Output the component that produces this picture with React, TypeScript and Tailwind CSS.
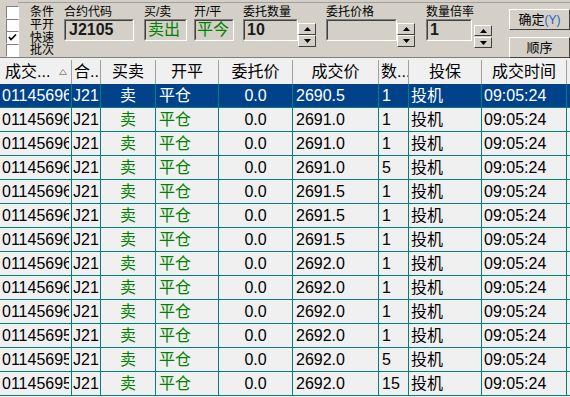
const font = { fontFamily: '"Liberation Sans", "Noto Sans CJK SC", sans-serif' };

type Row = { id: string; price: string; qty: string };

const rows: Row[] = [
  { id: "011456960", price: "2690.5", qty: "1" },
  { id: "011456960", price: "2691.0", qty: "1" },
  { id: "011456960", price: "2691.0", qty: "1" },
  { id: "011456960", price: "2691.0", qty: "5" },
  { id: "011456960", price: "2691.5", qty: "1" },
  { id: "011456960", price: "2691.5", qty: "1" },
  { id: "011456960", price: "2691.5", qty: "1" },
  { id: "011456960", price: "2692.0", qty: "1" },
  { id: "011456960", price: "2692.0", qty: "1" },
  { id: "011456960", price: "2692.0", qty: "1" },
  { id: "011456959", price: "2692.0", qty: "1" },
  { id: "011456959", price: "2692.0", qty: "5" },
  { id: "011456959", price: "2692.0", qty: "15" },
];

const cols = [
  { w: "w-[72px]", title: "成交...", align: "justify-start pl-[5px]" },
  { w: "w-[29px]", title: "合...", align: "justify-start pl-[2px]" },
  { w: "w-[55px]", title: "买卖", align: "justify-center" },
  { w: "w-[63px]", title: "开平", align: "justify-center" },
  { w: "w-[74px]", title: "委托价", align: "justify-center" },
  { w: "w-[86px]", title: "成交价", align: "justify-center" },
  { w: "w-[30px]", title: "数...", align: "justify-start pl-[2px]" },
  { w: "w-[73px]", title: "投保", align: "justify-center" },
  { w: "w-[85px]", title: "成交时间", align: "justify-center" },
];

function Check({ checked }: { checked?: boolean }) {
  return (
    <div className="w-[13px] h-[13px] shrink-0 border-t border-l border-t-[#808080] border-l-[#808080] border-b border-r border-b-white border-r-white bg-white flex items-center justify-center">
      {checked && (
        <svg width="9" height="9" viewBox="0 0 9 9">
          <path d="M1 4 L3 6.5 L8 1.5" stroke="#000" strokeWidth="1.6" fill="none" />
        </svg>
      )}
    </div>
  );
}

function Field({ label, w, children }: { label: string; w: string; children?: React.ReactNode }) {
  return (
    <div className="flex flex-col">
      <div className="text-[12px] leading-[14px] h-[15px] text-black pt-[1px]">{label}</div>
      <div
        className={`${w} h-[22px] border border-t-[#808080] border-l-[#808080] border-b-white border-r-white flex items-center`}
      >
        <div className="w-full h-full border border-t-[#404040] border-l-[#404040] border-b-[#d4d0c8] border-r-[#d4d0c8] flex items-center px-[2px]">
          {children}
        </div>
      </div>
    </div>
  );
}

function SpinBtn({ up, h }: { up?: boolean; h: string }) {
  return (
    <div className={`w-[18px] ${h} bg-[#d4d0c8] border border-t-white border-l-white border-b-[#404040] border-r-[#404040] flex items-center justify-center`}>
      <svg width="7" height="4" viewBox="0 0 7 4">
        {up ? <path d="M0 4 L3.5 0 L7 4 Z" fill="#000" /> : <path d="M0 0 L7 0 L3.5 4 Z" fill="#000" />}
      </svg>
    </div>
  );
}

function Spinner({ small }: { small?: boolean }) {
  return (
    <div className={`flex flex-col ${small ? "mt-[21px] gap-[1px]" : "mt-[19px]"}`}>
      <SpinBtn up h={small ? "h-[11px]" : "h-[12px]"} />
      <SpinBtn h={small ? "h-[11px]" : "h-[12px]"} />
    </div>
  );
}

function Button({ children }: { children: React.ReactNode }) {
  return (
    <div className="w-[61px] h-[21px] bg-[#d4d0c8] border border-t-white border-l-white border-b-[#404040] border-r-[#404040] flex items-center justify-center text-[13px] text-black">
      {children}
    </div>
  );
}

export default function App() {
  return (
    <div className="w-[570px] h-[397px] bg-[#f0f0f0] overflow-hidden" style={font}>
      {/* toolbar */}
      <div className="h-[58px] bg-[#d4d0c8] border-b border-[#808080]">
        <div className="h-[3px] ml-[18px] border-b border-[#a0a0a0]" />
        <div className="flex">
          <div className="flex flex-col pl-[6px] pt-[3px] w-[60px]">
            {[
              ["条件", false],
              ["平开", false],
              ["快速", true],
              ["批次", false],
            ].map(([l, c]) => (
              <div key={l as string} className="flex items-center h-[12.7px] gap-[11px]">
                <Check checked={c as boolean} />
                <span className="text-[12px] leading-[12px] text-black">{l as string}</span>
              </div>
            ))}
          </div>
          <div className="flex pt-[1px] ml-[4px]">
            <Field label="合约代码" w="w-[70px]">
              <span className="text-[16px] font-bold text-[#1a1a1a] ml-[1px]">J2105</span>
            </Field>
            <div className="ml-[10px]">
              <Field label="买/卖" w="w-[43px]">
                <span className="text-[16px] text-[#008000]">卖出</span>
              </Field>
            </div>
            <div className="ml-[7px]">
              <Field label="开/平" w="w-[40px]">
                <span className="text-[16px] text-[#008000] -ml-[1px]">平今</span>
              </Field>
            </div>
            <div className="ml-[9px] flex">
              <Field label="委托数量" w="w-[55px]">
                <span className="text-[16px] font-bold text-[#1a1a1a]">10</span>
              </Field>
              <Spinner />
            </div>
            <div className="ml-[10px] flex">
              <Field label="委托价格" w="w-[71px]" />
              <Spinner />
            </div>
            <div className="ml-[11px] flex">
              <Field label="数量倍率" w="w-[46px]">
                <span className="text-[16px] font-bold text-[#1a1a1a]">1</span>
              </Field>
              <Spinner small />
            </div>
            <div className="ml-[17px] flex flex-col gap-[7px] pt-[5px]">
              <Button>
                确定<span className="text-[#1f5fbf] text-[12px]">(Y)</span>
              </Button>
              <Button>顺序</Button>
            </div>
          </div>
        </div>
      </div>

      {/* header */}
      <div className="flex h-[26px] bg-[#f0f0f0] pt-[2px]">
        {cols.map((c, i) => (
          <div
            key={i}
            className={`${c.w} h-full flex items-center border-r border-[#a0a0a0] text-[16px] text-black whitespace-nowrap overflow-hidden ${c.align}`}
          >
            {c.title}
            {i === 0 && (
              <svg width="8" height="6" viewBox="0 0 8 6" className="ml-[9px]">
                <path d="M0.5 5.5 L4 0.5 L7.5 5.5 Z" fill="none" stroke="#909090" />
              </svg>
            )}
          </div>
        ))}
      </div>

      {/* body */}
      <div className="flex flex-col">
        {rows.map((r, i) => {
          const sel = i === 0;
          const txt = sel ? "text-white" : "text-black";
          const grn = sel ? "text-white" : "text-[#008000]";
          const cell = `h-full flex items-center border-r border-[#008080] whitespace-nowrap overflow-hidden text-[16px]`;
          return (
            <div
              key={i}
              className={`flex h-[24px] border-b border-[#008080] ${sel ? "bg-[#00428a]" : "bg-[#f0f0f0]"}`}
            >
              <div className={`w-[72px] ${cell} ${txt} pl-[2px]`}>
                <span className="block w-[67px] overflow-hidden">{r.id}</span>
              </div>
              <div className={`w-[29px] ${cell} ${txt} pl-[1px]`}>
                <span className="block w-[26px] overflow-hidden">J2105</span>
              </div>
              <div className={`w-[55px] ${cell} ${grn} justify-center`}>卖</div>
              <div className={`w-[63px] ${cell} ${grn} pl-[3px]`}>平仓</div>
              <div className={`w-[74px] ${cell} ${txt} justify-center`}>0.0</div>
              <div className={`w-[86px] ${cell} ${txt} pl-[3px]`}>{r.price}</div>
              <div className={`w-[30px] ${cell} ${txt} pl-[3px]`}>{r.qty}</div>
              <div className={`w-[73px] ${cell} ${txt} pl-[2px]`}>投机</div>
              <div className={`w-[85px] ${cell} ${txt} pl-[2px]`}>09:05:24</div>
            </div>
          );
        })}
      </div>
    </div>
  );
}
